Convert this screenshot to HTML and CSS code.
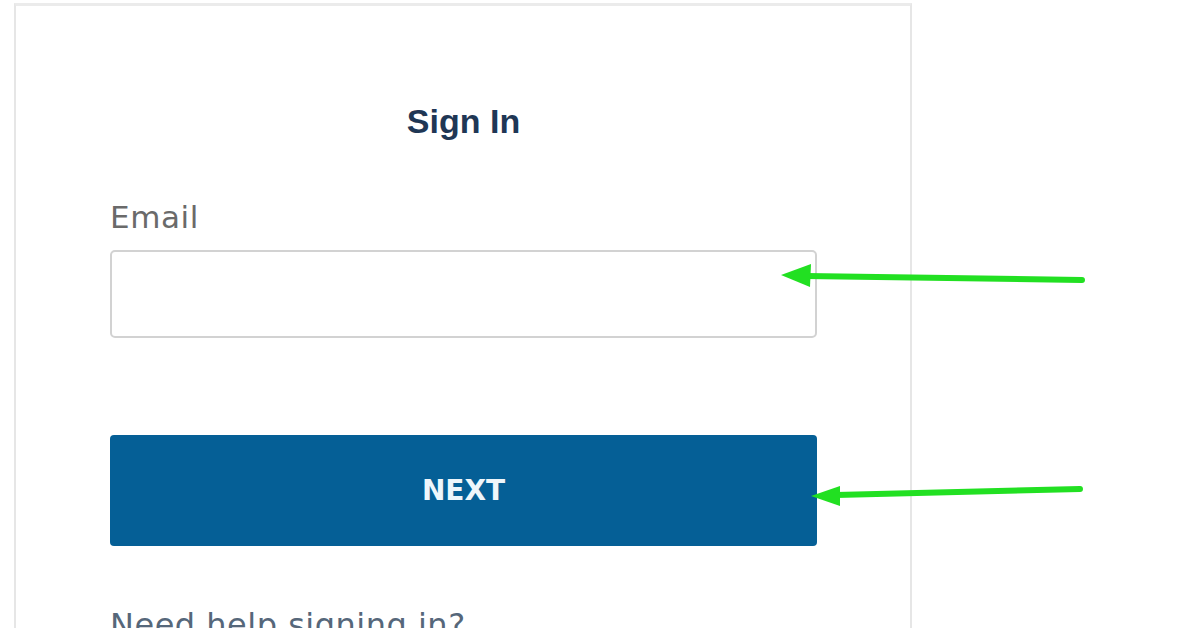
FILE: index.html
```html
<!DOCTYPE html>
<html lang="en">
<head>
<meta charset="utf-8">
<title>Sign In</title>
<link rel="stylesheet" href="styles.css">
</head>
<body>
<div class="page">
  <main class="card">
    <h1 class="title">Sign In</h1>
    <form class="form">
      <label class="label" for="email">Email</label>
      <input class="input" id="email" type="text">
      <button class="btn" type="button">NEXT</button>
    </form>
    <a class="help" href="#">Need help signing in?</a>
  </main>
  <svg class="arrows" width="1196" height="628" viewBox="0 0 1196 628">
    <path d="M806 276 L1082 280" stroke="#22e022" stroke-width="6" stroke-linecap="round" fill="none"/>
    <path d="M781 275 L811 264 L810 287 Z" fill="#22e022"/>
    <path d="M836 495 L1080 489" stroke="#22e022" stroke-width="6" stroke-linecap="round" fill="none"/>
    <path d="M811 496 L840 486 L840 506 Z" fill="#22e022"/>
  </svg>
</div>
</body>
</html>
```

FILE: styles.css
```css
html, body {
  margin: 0;
  padding: 0;
  background: #ffffff;
  overflow: hidden;
}

.page {
  position: relative;
  width: 1196px;
  height: 628px;
  overflow: hidden;
}

.card {
  box-sizing: border-box;
  margin: 3px 0 0 14px;
  width: 898px;
  min-height: 700px;
  background: #ffffff;
  border: 2px solid #e6e6e6;
  border-top: 3px solid #ebebeb;
  padding: 95px 93px 0 94px;
  display: flex;
  flex-direction: column;
}

.title {
  margin: 0;
  font-family: "Liberation Sans", Arial, sans-serif;
  font-weight: 700;
  font-size: 34px;
  line-height: 40px;
  color: #1f3755;
  text-align: center;
}

.form {
  display: flex;
  flex-direction: column;
  margin-top: 58px;
}

.label {
  font-family: "DejaVu Sans", sans-serif;
  font-size: 31px;
  line-height: 36px;
  letter-spacing: 0.6px;
  color: #6a6a6a;
}

.input {
  box-sizing: border-box;
  margin-top: 15px;
  height: 88px;
  width: 100%;
  border: 2px solid #d2d2d2;
  border-radius: 5px;
  background: #ffffff;
  outline: none;
}

.btn {
  margin-top: 97px;
  height: 111px;
  width: 100%;
  border: none;
  border-radius: 4px;
  background: #055f96;
  color: #eef6fb;
  font-family: "DejaVu Sans", sans-serif;
  font-weight: 700;
  font-size: 28px;
  cursor: pointer;
}

.help {
  margin-top: 60px;
  font-family: "DejaVu Sans", sans-serif;
  font-size: 32px;
  line-height: 38px;
  letter-spacing: 0.5px;
  color: #56677a;
  text-decoration: none;
}

.arrows {
  position: absolute;
  left: 0;
  top: 0;
  pointer-events: none;
}
```
